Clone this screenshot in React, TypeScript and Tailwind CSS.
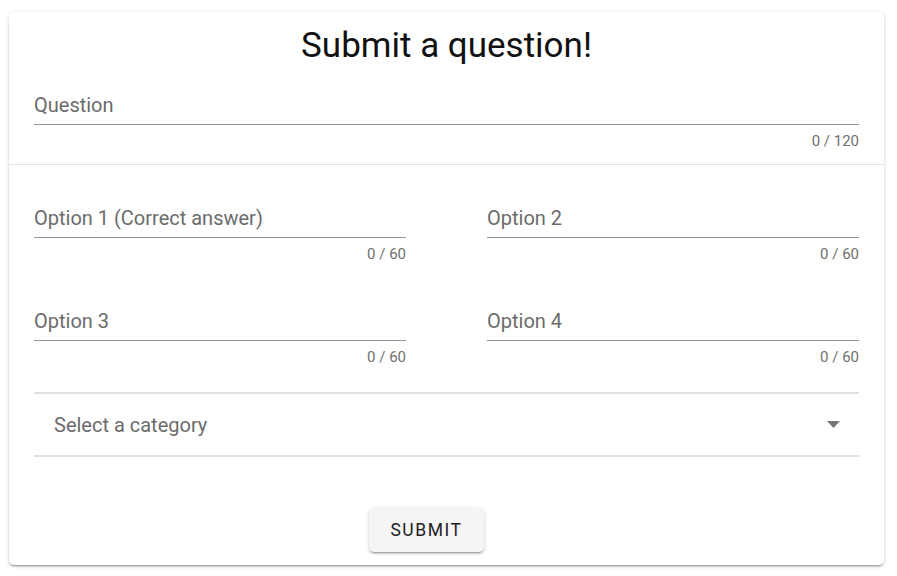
type FieldProps = {
	label: string;
	max: number;
};

function Field({ label, max }: FieldProps) {
	return (
		<div>
			<div className="h-[35px] border-b border-[#949494] text-[20px] leading-[30px] text-[#6b6b6b]">
				{label}
			</div>
			<div className="mt-[7px] text-right text-[15px] leading-[18px] text-[#707070]">
				0 / {max}
			</div>
		</div>
	);
}

export default function App() {
	return (
		<div className="min-h-[576px] bg-white pt-[12px] font-['Roboto',sans-serif]">
			<div className="ml-[9px] w-[875px] rounded-[5px] bg-white shadow-[0_3px_1px_-2px_rgba(0,0,0,0.2),0_2px_2px_0_rgba(0,0,0,0.14),0_1px_5px_0_rgba(0,0,0,0.12)]">
				<div className="px-[25px] pt-[14px]">
					<h1 className="text-center text-[35px] leading-[40px] text-[#111111]">
						Submit a question!
					</h1>
					<div className="mt-[24px]">
						<Field label="Question" max={120} />
					</div>
				</div>
				<hr className="mt-[14px] border-t border-[#e3e3e3]" />
				<div className="px-[25px] pt-[38px] pb-[13px]">
					<div className="grid grid-cols-2 gap-x-[81px] gap-y-[43px]">
						<Field label="Option 1 (Correct answer)" max={60} />
						<Field label="Option 2" max={60} />
						<Field label="Option 3" max={60} />
						<Field label="Option 4" max={60} />
					</div>
					<div className="mt-[26px] flex h-[65px] items-center justify-between border-y-2 border-[#e0e0e0] pl-[20px] pr-[19px]">
						<span className="text-[20px] text-[#6b6b6b]">Select a category</span>
						<svg width="13" height="7" viewBox="0 0 13 7">
							<path d="M0 0h13L6.5 7z" fill="#757575" />
						</svg>
					</div>
					<div className="mt-[51px] flex justify-center pr-[40px]">
						<button
							type="button"
							className="h-[44px] w-[115px] rounded-[5px] bg-[#f5f5f5] text-[17.5px] font-normal tracking-[0.0892em] text-[#212121] shadow-[0_3px_1px_-2px_rgba(0,0,0,0.2),0_2px_2px_0_rgba(0,0,0,0.14),0_1px_5px_0_rgba(0,0,0,0.12)]"
						>
							SUBMIT
						</button>
					</div>
				</div>
			</div>
		</div>
	);
}
